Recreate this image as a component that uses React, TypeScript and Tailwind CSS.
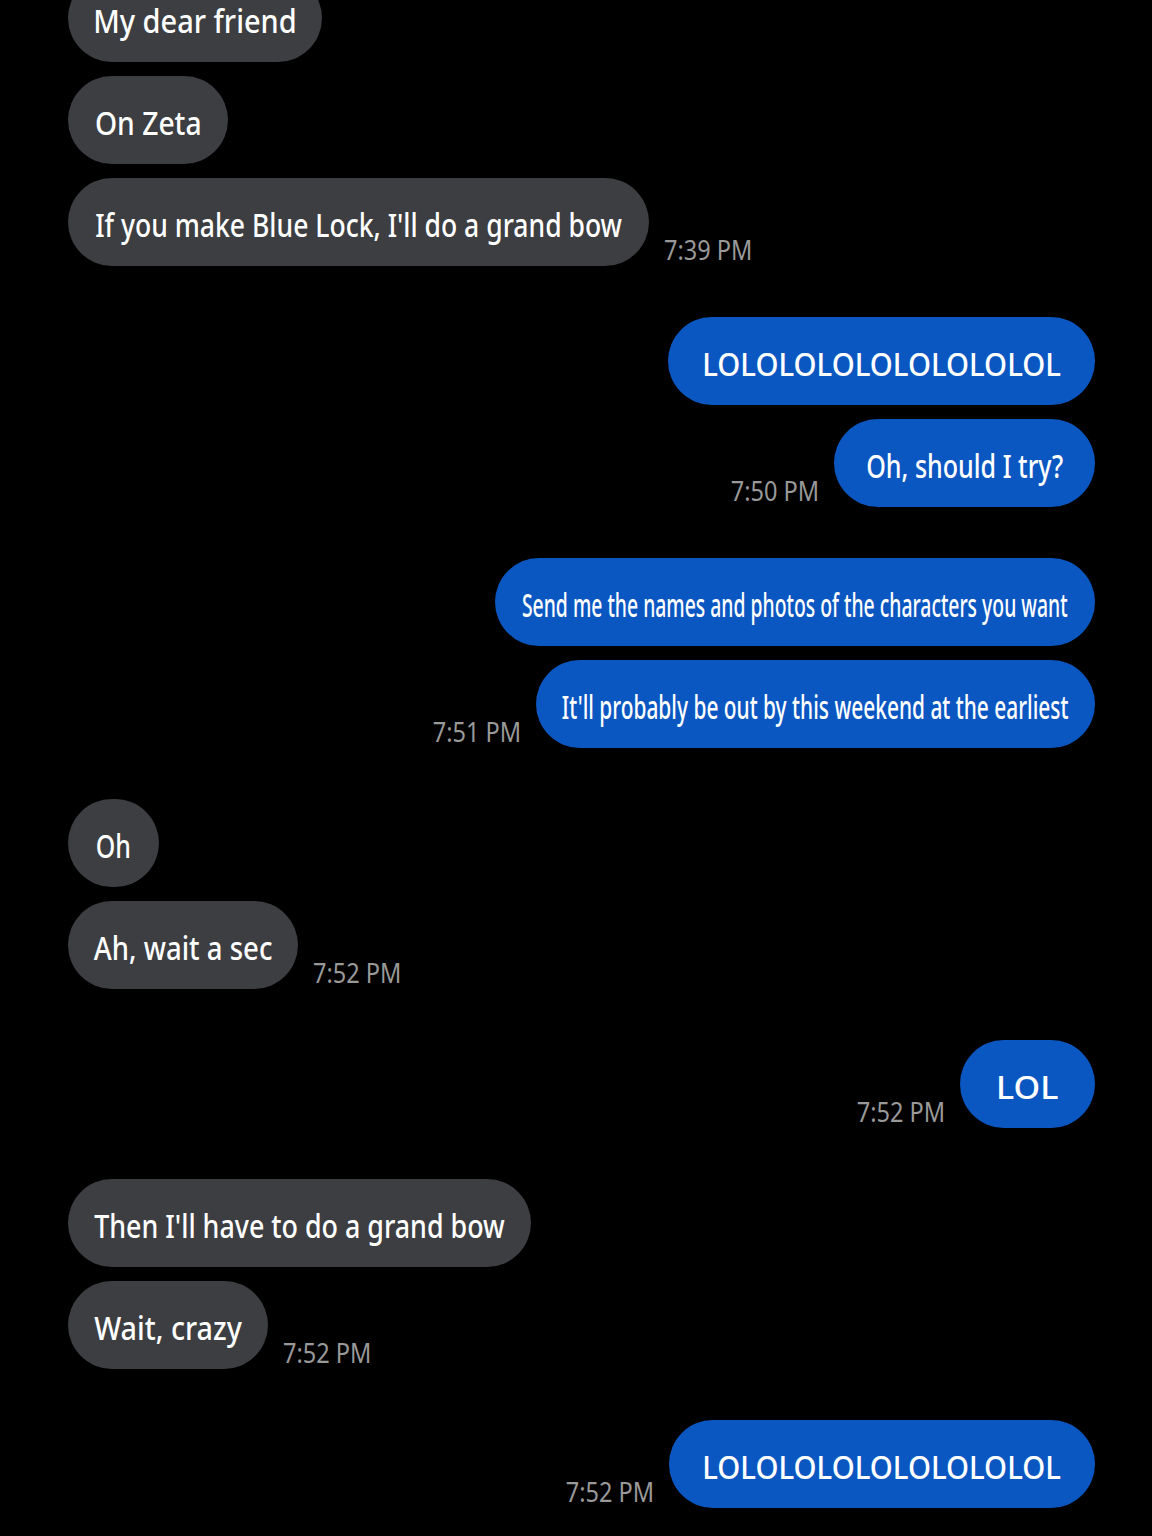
import React from 'react';

type Msg = { text: string; w: string; sx: string };
type Group = { side: 'in' | 'out'; time: string; msgs: Msg[] };

// bubble widths and horizontal squeeze read off the screenshot
const groups: Group[] = [
    { side: 'in', time: '7:39 PM', msgs: [
        { text: 'My dear friend', w: 'w-[254px]', sx: 'scale-x-[0.878]' },
        { text: 'On Zeta', w: 'w-[160px]', sx: 'scale-x-[0.856]' },
        { text: "If you make Blue Lock, I'll do a grand bow", w: 'w-[581px]', sx: 'scale-x-[0.804]' },
    ] },
    { side: 'out', time: '7:50 PM', msgs: [
        { text: 'LOLOLOLOLOLOLOLOLOL', w: 'w-[427px]', sx: 'scale-x-[0.89]' },
        { text: 'Oh, should I try?', w: 'w-[261px]', sx: 'scale-x-[0.76]' },
    ] },
    { side: 'out', time: '7:51 PM', msgs: [
        { text: 'Send me the names and photos of the characters you want', w: 'w-[600px]', sx: 'scale-x-[0.587]' },
        { text: "It'll probably be out by this weekend at the earliest", w: 'w-[559px]', sx: 'scale-x-[0.633]' },
    ] },
    { side: 'in', time: '7:52 PM', msgs: [
        { text: 'Oh', w: 'w-[91px]', sx: 'scale-x-[0.756]' },
        { text: 'Ah, wait a sec', w: 'w-[230px]', sx: 'scale-x-[0.834]' },
    ] },
    { side: 'out', time: '7:52 PM', msgs: [
        { text: 'LOL', w: 'w-[135px]', sx: 'scale-x-[1.03]' },
    ] },
    { side: 'in', time: '7:52 PM', msgs: [
        { text: "Then I'll have to do a grand bow", w: 'w-[463px]', sx: 'scale-x-[0.813]' },
        { text: 'Wait, crazy', w: 'w-[200px]', sx: 'scale-x-[0.869]' },
    ] },
    { side: 'out', time: '7:52 PM', msgs: [
        { text: 'LOLOLOLOLOLOLOLOLOL', w: 'w-[426px]', sx: 'scale-x-[0.89]' },
    ] },
];

const Bubble = ({ msg, side }: { msg: Msg; side: 'in' | 'out' }) => (
    <div className={`${msg.w} h-[88px] shrink-0 rounded-full flex items-center justify-center ${side === 'in' ? 'bg-[#3c3e41]' : 'bg-[#0b57c2]'}`}>
        <span className={`whitespace-nowrap text-[33px] font-medium leading-none text-white translate-y-[2px] ${msg.sx}`}>{msg.text}</span>
    </div>
);

const Time = ({ time, side }: { time: string; side: 'in' | 'out' }) => (
    <span className={`whitespace-nowrap text-[28px] leading-[28px] mb-[3px] text-[#999999] scale-x-[0.84] ${side === 'in' ? 'origin-left' : 'origin-right'}`}>
        {time}
    </span>
);

export default function App() {
    return (
        <div className="w-full h-[1536px] bg-black overflow-hidden" style={{ fontFamily: '"Noto Sans", "Open Sans", sans-serif' }}>
            <div className="flex flex-col gap-[51px] pl-[68px] pr-[57px] -mt-[26px]">
                {groups.map((g, gi) => (
                    <div key={gi} className={`flex flex-col gap-[14px] ${g.side === 'in' ? 'items-start' : 'items-end'}`}>
                        {g.msgs.map((m, mi) => {
                            const last = mi === g.msgs.length - 1;
                            if (!last) return <Bubble key={mi} msg={m} side={g.side} />;
                            return (
                                <div key={mi} className="flex items-end gap-[15px]">
                                    {g.side === 'out' && <Time time={g.time} side="out" />}
                                    <Bubble msg={m} side={g.side} />
                                    {g.side === 'in' && <Time time={g.time} side="in" />}
                                </div>
                            );
                        })}
                    </div>
                ))}
            </div>
        </div>
    );
}
